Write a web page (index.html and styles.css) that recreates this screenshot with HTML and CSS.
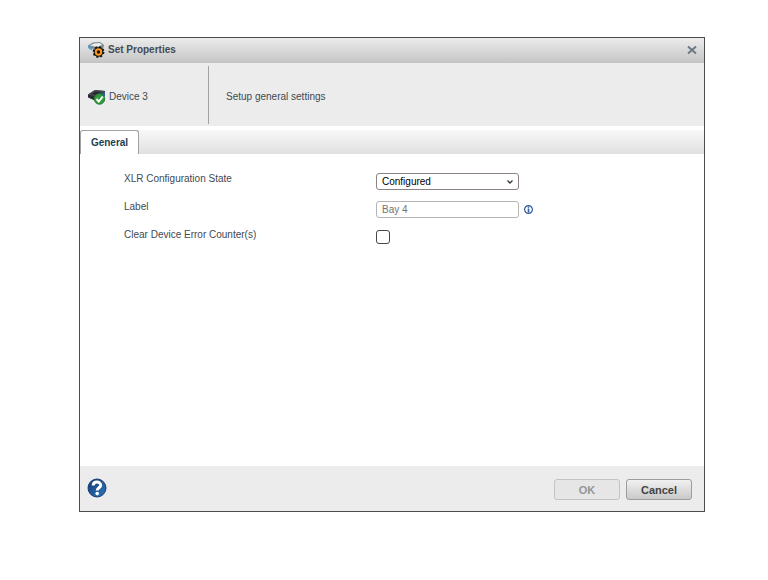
FILE: index.html
```
<!DOCTYPE html>
<html lang="en">
<head>
<meta charset="utf-8">
<title>Set Properties</title>
<link rel="stylesheet" href="styles.css">
</head>
<body>
<main class="dialog" role="dialog" aria-labelledby="dialog-title">
  <header class="titlebar">
    <svg class="title-icon" viewBox="0 0 18 18" aria-hidden="true">
      <path d="M0 4.500 5 1.500l7-.5 4 3-1 4-5 1-8-2z" fill="#7d868d"/>
      <path d="M2 4.500 6 2.500l6-.5 2 2-5 2z" fill="#e9eef1"/>
      <path d="M.8 4.500v2l3.200 2" fill="none" stroke="#4d9fd0" stroke-width="1.500"/>
      <circle cx="10.500" cy="11" r="4.800" fill="#17110c"/>
      <circle cx="10.500" cy="11" r="5" fill="none" stroke="#17110c" stroke-width="1.800" stroke-dasharray="2 1.930"/>
      <circle cx="10.500" cy="11" r="2.700" fill="#17110c" stroke="#f59a22" stroke-width="2"/>
    </svg>
    <h1 class="title" id="dialog-title">Set Properties</h1>
    <button class="close" type="button" aria-label="Close">
      <svg viewBox="0 0 10 10" aria-hidden="true"><path d="M1 1.500 9 8.500M9 1.500 1 8.500" stroke="#6c7885" stroke-width="2" fill="none"/></svg>
    </button>
  </header>
  <section class="summary">
    <div class="device">
      <svg class="device-icon" viewBox="0 0 18 16" aria-hidden="true">
        <path d="M0 5.500 7 1l10 1v5l-8 5.500-9-4z" fill="#2a2d31"/>
        <path d="M0 5.500 7 1l10 1-8 5.500z" fill="#4a4e53"/>
        <path d="M3 5 7.500 2.500l6 .5-5 3z" fill="#25282c"/>
        <path d="M9 8 17 2.500V7l-8 5.500z" fill="#2b5f95"/>
        <circle cx="11.500" cy="10" r="5.200" fill="#329b3c" stroke="#2a7d36"/>
        <path d="m8.500 10 2.300 2.500 4-5" fill="none" stroke="#fff" stroke-width="2"/>
      </svg>
      <span>Device 3</span>
    </div>
    <p class="description">Setup general settings</p>
  </section>
  <nav class="tabs" role="tablist">
    <button class="tab" type="button" role="tab" aria-selected="true">General</button>
  </nav>
  <form class="panel" id="properties">
    <div class="row">
      <label for="state">XLR Configuration State</label>
      <div class="select-wrap">
        <select class="field" id="state"><option>Configured</option><option>Unconfigured</option></select>
        <svg class="chevron" viewBox="0 0 8 6" aria-hidden="true"><path d="m1.500 1.500 2.500 2.500 2.500-2.500" fill="none" stroke="#333" stroke-width="1.300"/></svg>
      </div>
    </div>
    <div class="row">
      <label for="label">Label</label>
      <div class="control">
        <input class="field muted" id="label" type="text" value="Bay 4">
        <svg class="info" viewBox="0 0 9 9" aria-hidden="true"><circle cx="4.500" cy="4.500" r="3.900" fill="#fff" stroke="#315a99" stroke-width="1.200"/><path d="M4.500 1.500v1.300M4.500 3.500v4" stroke="#315a99" stroke-width="1.600"/></svg>
      </div>
    </div>
    <div class="row">
      <label for="clear">Clear Device Error Counter(s)</label>
      <input class="check" id="clear" type="checkbox">
    </div>
  </form>
  <footer class="footer">
    <button class="help" type="button" aria-label="Help">
      <svg viewBox="0 0 20 20" aria-hidden="true">
        <defs><linearGradient id="blue" x2="1" y2="1"><stop offset="0" stop-color="#123a73"/><stop offset="1" stop-color="#2f78bb"/></linearGradient></defs>
        <circle cx="10" cy="10" r="9" fill="url(#blue)" stroke="#173c70"/>
        <path d="M6.200 7.600C6.200 3 13.700 3 13.700 7.200c0 2.500-3.500 2.700-3.500 5.300" fill="none" stroke="#fff" stroke-width="3"/>
        <circle cx="10.200" cy="15.600" r="1.800" fill="#fff"/>
      </svg>
    </button>
    <button class="action" type="submit" form="properties" disabled>OK</button>
    <button class="action" type="button">Cancel</button>
  </footer>
</main>
</body>
</html>
```
FILE: styles.css
```
* { box-sizing: border-box; }
body {
  margin: 0;
  background: #fff;
  color: #414952;
  font: 10px/12px "Liberation Sans", Arial, sans-serif;
}
button, input, select { font: inherit; margin: 0; }
svg { display: block; }
.dialog {
  display: flex;
  flex-direction: column;
  min-height: calc(100vh - 105px);
  margin: 37px 63px 0 79px;
  border: 1px solid #4c4c4e;
  background: #fff;
}
.titlebar {
  display: flex;
  align-items: center;
  height: 25px;
  padding: 0 7px 2px 8px;
  background: linear-gradient(#ececec, #c4c4c4);
}
.title-icon { width: 18px; height: 18px; margin-right: 2px; }
.title { flex: 1; margin: 0; font-size: 10px; color: #434b53; }
.close { padding: 0; border: 0; background: none; }
.close svg { width: 10px; height: 10px; }
.summary {
  display: flex;
  align-items: stretch;
  height: 63px;
  padding: 3px 0 2px 8px;
  background: #ececec;
}
.device {
  display: flex;
  align-items: center;
  gap: 3px;
  width: 121px;
  padding-top: 4px;
  border-right: 1px solid #a2a2a2;
}
.device-icon { width: 18px; height: 16px; }
.description { align-self: center; margin: 0; padding: 4px 0 0 17px; }
.tabs {
  display: flex;
  height: 24px;
  margin-top: 4px;
  background: linear-gradient(#f8f8f8, #e0e0e0);
}
.tab {
  width: 59px;
  padding: 0;
  border: 1px solid #a2a2a2;
  border-bottom: 0;
  border-radius: 3px 3px 0 0;
  background: #fff;
  color: #1d3f54;
  font-weight: bold;
}
.panel {
  display: flex;
  flex: 1;
  flex-direction: column;
  gap: 11px;
  padding: 19px 20px 20px 44px;
}
.row {
  display: grid;
  grid-template-columns: 252px 1fr;
  align-items: start;
  min-height: 17px;
}
.control { display: flex; align-items: center; gap: 5px; }
.select-wrap { position: relative; width: 143px; }
.field {
  display: block;
  width: 143px;
  height: 17px;
  padding: 0 5px;
  border: 1px solid #8c8285;
  border-radius: 3px;
  background: #fff;
  color: #000;
}
select.field { appearance: none; }
.muted { border-color: #b5b5b5; color: #727272; }
.chevron { position: absolute; right: 5px; top: 6px; width: 8px; height: 6px; pointer-events: none; }
.info { width: 9px; height: 9px; }
.check {
  appearance: none;
  width: 14px;
  height: 14px;
  margin: 1px 0 0;
  border: 1px solid #45474f;
  border-radius: 3px;
  background: #fff;
}
.check:checked { background: #315a99; }
.footer {
  display: flex;
  align-items: center;
  gap: 6px;
  height: 45px;
  padding: 2px 12px 0 7px;
  background: #ececec;
}
.help { margin-right: auto; padding: 0 0 3px; border: 0; background: none; }
.help svg { width: 20px; height: 20px; }
.action {
  width: 66px;
  height: 21px;
  padding: 0;
  border: 1px solid #9d9d9d;
  border-radius: 3px;
  background: linear-gradient(#f1f1f1, #c9c9c9);
  color: #434343;
  font-size: 11px;
  font-weight: bold;
}
.action:disabled { border-color: #c3c3c3; background: #e6e6e6; color: #959595; }
```
